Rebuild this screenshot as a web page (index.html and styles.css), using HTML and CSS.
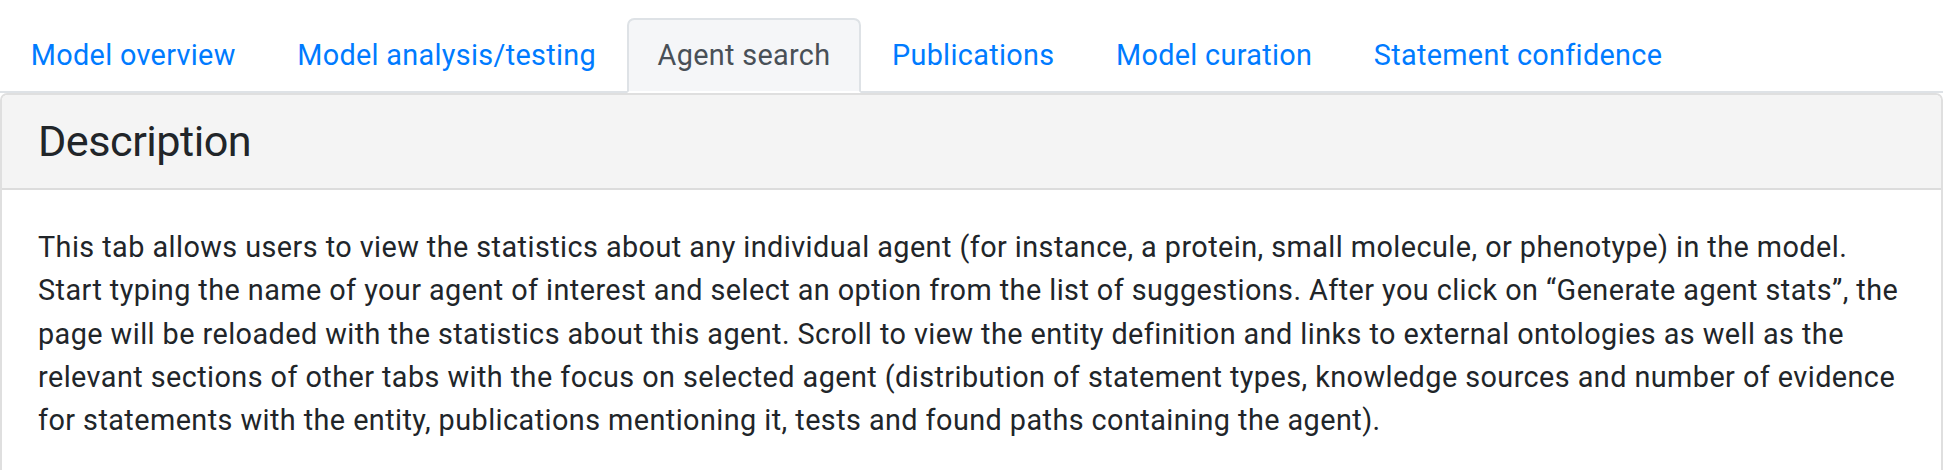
FILE: index.html
```html
<!DOCTYPE html>
<html lang="en">
<head>
<meta charset="utf-8">
<title>Agent search</title>
<link rel="stylesheet" href="styles.css">
</head>
<body>
<div class="page">
  <ul class="nav-tabs">
    <li class="nav-item"><a class="nav-link" href="#">Model overview</a></li>
    <li class="nav-item"><a class="nav-link" href="#">Model analysis/testing</a></li>
    <li class="nav-item"><a class="nav-link active" href="#">Agent search</a></li>
    <li class="nav-item"><a class="nav-link" href="#">Publications</a></li>
    <li class="nav-item"><a class="nav-link" href="#">Model curation</a></li>
    <li class="nav-item"><a class="nav-link" href="#">Statement confidence</a></li>
  </ul>
  <div class="card">
    <div class="card-header">
      <h4 class="card-title">Description</h4>
    </div>
    <div class="card-body">
      <p class="card-text">This tab allows users to view the statistics about any individual agent (for instance, a protein, small molecule, or phenotype) in the model.<br>
      Start typing the name of your agent of interest and select an option from the list of suggestions. After you click on “Generate agent stats”, the<br>
      page will be reloaded with the statistics about this agent. Scroll to view the entity definition and links to external ontologies as well as the<br>
      relevant sections of other tabs with the focus on selected agent (distribution of statement types, knowledge sources and number of evidence<br>
      for statements with the entity, publications mentioning it, tests and found paths containing the agent).</p>
    </div>
  </div>
</div>
</body>
</html>
```
FILE: styles.css
```css
html, body {
  margin: 0;
  padding: 0;
  background: #ffffff;
}

body {
  font-family: Roboto, "Liberation Sans", Arial, sans-serif;
  font-size: 28.8px;
  line-height: 1.5;
  color: #212529;
}

.page {
  padding: 18px 7px 0 0;
}

.nav-tabs {
  display: flex;
  list-style: none;
  margin: 0;
  padding: 0;
  border-bottom: 2px solid #dee2e6;
}

.nav-item {
  margin-bottom: -2px;
}

.nav-link {
  display: block;
  padding: 14px 28.8px;
  border: 2px solid transparent;
  border-radius: 7.2px 7.2px 0 0;
  color: #007bff;
  text-decoration: none;
  letter-spacing: 0.32px;
}

.nav-link.active {
  color: #495057;
  background: #f5f6f8;
  border-color: #dee2e6 #dee2e6 #ffffff;
}

.card {
  border: 2px solid #dfdfdf;
  border-radius: 7.2px;
  background: #ffffff;
  overflow: hidden;
}

.card-header {
  padding: 20.6px 36px;
  background: #f4f4f4;
  border-bottom: 2px solid #dcdcdc;
}

.card-title {
  margin: 0;
  font-size: 43.2px;
  font-weight: 400;
  line-height: 1.2;
  letter-spacing: -0.5px;
  color: #212529;
}

.card-body {
  padding: 36px;
}

.card-text {
  margin: 0 0 28.8px;
  white-space: nowrap;
  letter-spacing: 0.44px;
}
```
